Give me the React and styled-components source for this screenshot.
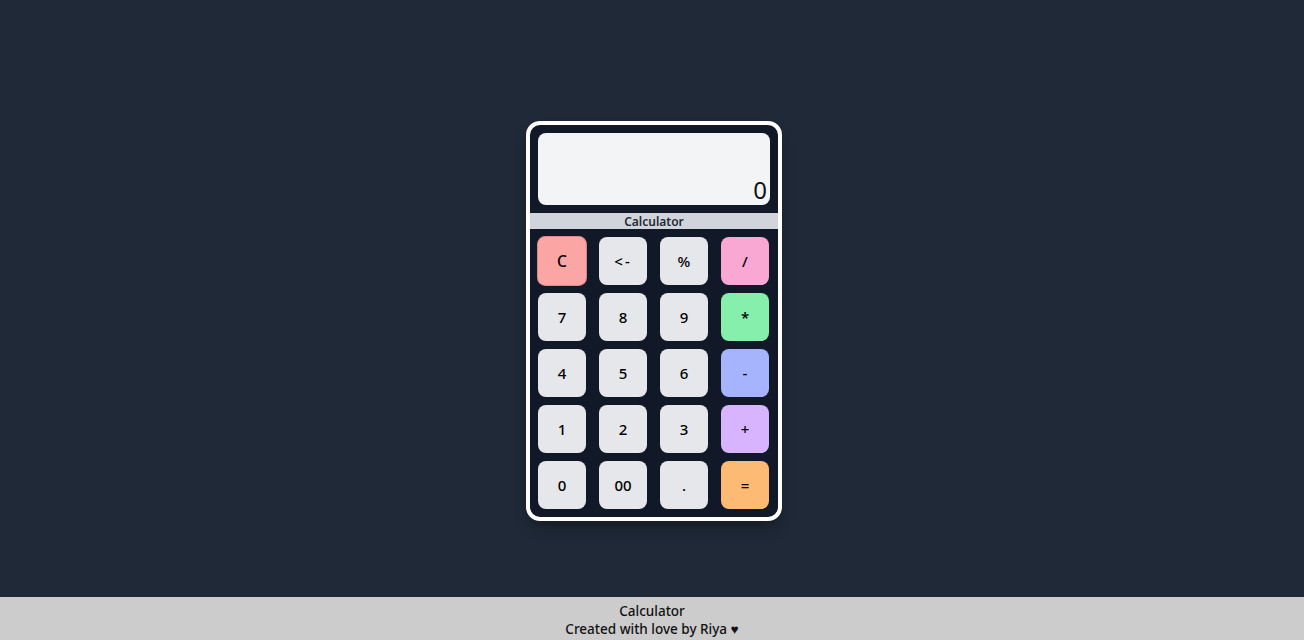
import React, { useState } from 'react';
import styled, { createGlobalStyle } from 'styled-components';

const GlobalStyle = createGlobalStyle`
  html, body {
    margin: 0;
    padding: 0;
    background-color: #1f2937;
    font-family: "Noto Sans", "Open Sans", sans-serif;
  }
`;

const Page = styled.main`
  height: 100vh;
  box-sizing: border-box;
  padding: 2px 0 0 4px;
  display: flex;
  justify-content: center;
  align-items: center;
`;

const Body = styled.div`
  width: 248px;
  height: 392px;
  background-color: #111827;
  border: 4px solid #fff;
  border-radius: 14px;
  box-shadow: 0 10px 15px -3px rgba(0, 0, 0, 0.25), 0 4px 6px -4px rgba(0, 0, 0, 0.2);
  display: flex;
  flex-direction: column;
  overflow: hidden;
`;

const Screen = styled.div`
  margin: 8px;
  height: 72px;
  background-color: #f3f4f6;
  border-radius: 8px;
  display: flex;
  align-items: flex-end;
  justify-content: flex-end;
  padding: 0 3px 0 0;
  font-size: 24px;
  font-weight: 400;
  line-height: 30px;
  color: #111;
`;

const Label = styled.div`
  height: 16px;
  background-color: #d1d5db;
  color: #1f2937;
  font-size: 12px;
  font-weight: 600;
  line-height: 17px;
  text-align: center;
`;

const Keys = styled.div`
  display: grid;
  grid-template-columns: repeat(4, 48px);
  justify-content: space-between;
  row-gap: 8px;
  padding: 8px 9px 8px 8px;
`;

const Key = styled.button`
  width: 48px;
  height: 48px;
  border: none;
  border-radius: 8px;
  background-color: ${p => p.color || '#e5e7eb'};
  color: #000;
  font-family: inherit;
  font-size: 15px;
  font-weight: 500;
  letter-spacing: ${p => (p.spaced ? '2px' : 'normal')};
  cursor: pointer;
  padding: 0;
  transform: ${p => (p.active ? 'scale(1.04)' : 'none')};
  box-shadow: ${p => (p.active ? 'inset 0 0 0 1px rgba(0,0,0,0.15)' : 'none')};
`;

const Footer = styled.footer`
  position: fixed;
  left: 0;
  right: 0;
  bottom: 0;
  height: 43px;
  background-color: #cccccc;
  color: #111;
  font-size: 13.5px;
  font-weight: 500;
  line-height: 18px;
  text-align: center;
  display: flex;
  flex-direction: column;
  justify-content: center;
  padding-top: 2px;
  box-sizing: border-box;
`;

const keys = [
  ['C', '#fca5a5'], ['<-'], ['%'], ['/', '#f9a8d4'],
  ['7'], ['8'], ['9'], ['*', '#86efac'],
  ['4'], ['5'], ['6'], ['-', '#a5b4fc'],
  ['1'], ['2'], ['3'], ['+', '#d8b4fe'],
  ['0'], ['00'], ['.'], ['=', '#fdba74'],
];

export default function App() {
  const [value, setValue] = useState('0');

  const press = (k) => {
    if (k === 'C') return setValue('0');
    if (k === '<-') return setValue(v => (v.length > 1 ? v.slice(0, -1) : '0'));
    if (k === '=') {
      try {
        // eslint-disable-next-line no-new-func
        setValue(v => String(Function(`return (${v})`)()));
      } catch (e) {
        setValue('Error');
      }
      return;
    }
    setValue(v => (v === '0' ? k : v + k));
  };

  return (
    <>
      <GlobalStyle />
      <Page>
        <Body>
          <Screen>{value}</Screen>
          <Label>Calculator</Label>
          <Keys>
            {keys.map(([k, color]) => (
              <Key
                key={k}
                color={color}
                active={k === 'C'}
                spaced={k === '<-'}
                onClick={() => press(k)}
              >
                {k}
              </Key>
            ))}
          </Keys>
        </Body>
      </Page>
      <Footer>
        <div>Calculator</div>
        <div>Created with love by Riya ♥</div>
      </Footer>
    </>
  );
}
